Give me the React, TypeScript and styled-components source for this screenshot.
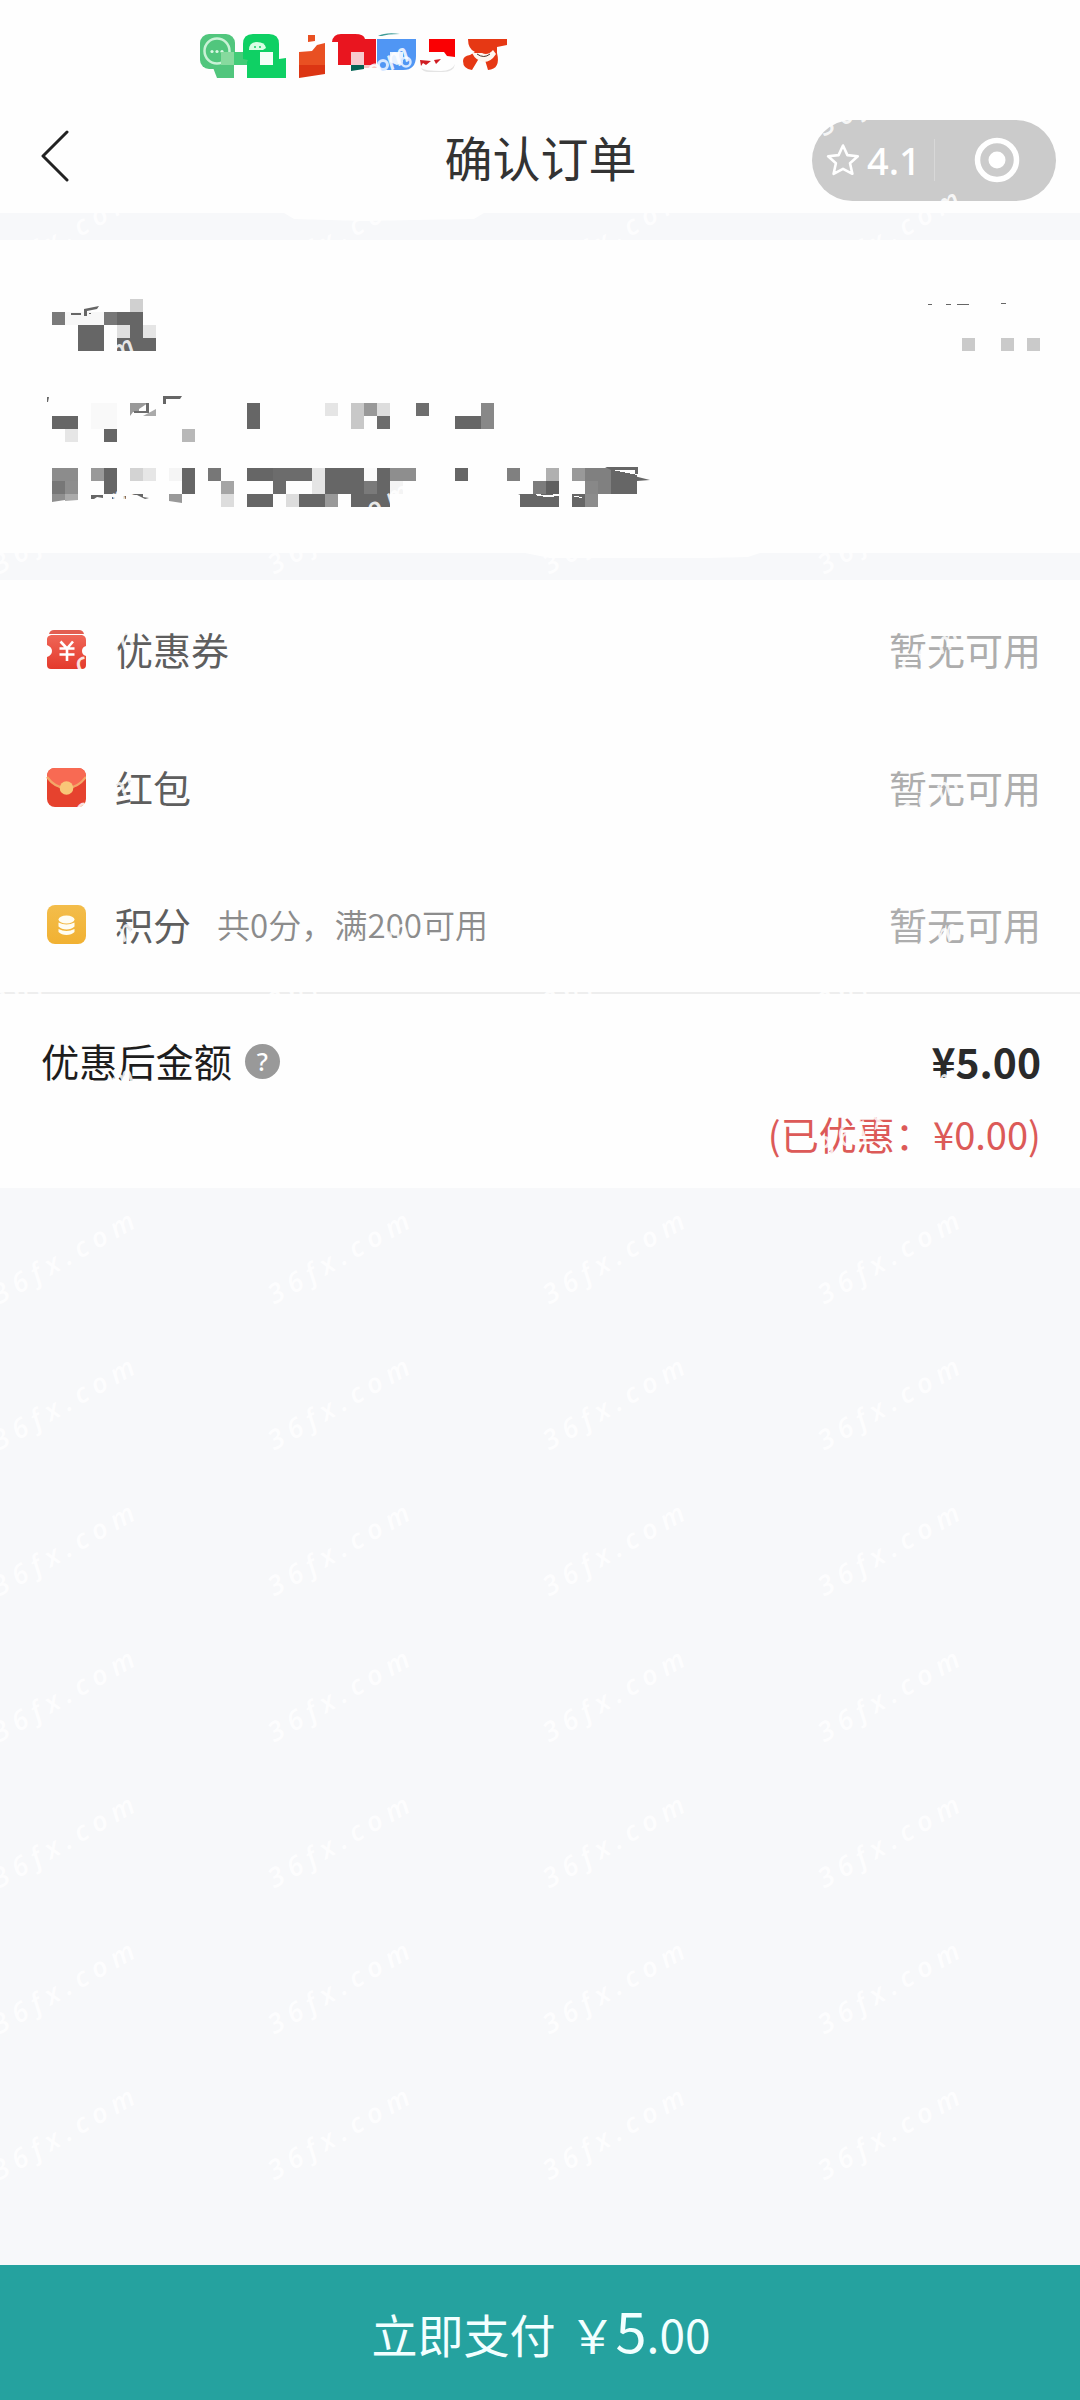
import React from 'react';
import styled, { createGlobalStyle } from 'styled-components';

const GlobalStyle = createGlobalStyle`
  * { box-sizing: border-box; }
  body {
    margin: 0;
    background: #f7f8fa;
    font-family: "Noto Sans CJK SC", "Noto Sans", sans-serif;
  }
`;

const Page = styled.div`
  position: relative;
  display: flex;
  flex-direction: column;
  width: 1080px;
  height: 2400px;
  overflow: hidden;
  background: #f7f8fa;
`;

const StatusBar = styled.div`
  flex: none;
  height: 100px;
  padding: 30px 0 0 198px;
  background: #fefefe;
  svg { display: block; }
`;

const Header = styled.header`
  flex: none;
  display: grid;
  grid-template-columns: 1fr auto 1fr;
  align-items: center;
  height: 113px;
  padding: 0 24px 0 40px;
  background: #fefefe;
`;

const BackButton = styled.button`
  justify-self: start;
  display: flex;
  padding: 0;
  margin-top: -1px;
  border: 0;
  background: none;
`;

const Title = styled.h1`
  margin: 0 15px 1px 0;
  font-size: 48px;
  line-height: 60px;
  font-weight: 400;
  color: #333;
`;

const Capsule = styled.div`
  justify-self: end;
  display: flex;
  align-items: center;
  width: 244px;
  height: 81px;
  margin-top: 7px;
  border-radius: 41px;
  background: #cbcbcb;
  color: #fff;
`;

const Rating = styled.div`
  display: flex;
  align-items: center;
  gap: 7px;
  width: 123px;
  height: 42px;
  padding-left: 14px;
  border-right: 1px solid #d8d8d8;
  font: 500 38px/42px "Noto Sans", sans-serif;
`;

const CloseTarget = styled.div`
  flex: 1;
  display: flex;
  justify-content: center;
  padding-left: 3px;
`;

const Band = styled.div`
  flex: none;
  height: 27px;
  svg { display: block; overflow: visible; }
`;

const Card = styled.section`
  flex: none;
  background: #fefefe;
`;

const Contact = styled.div`
  height: 313px;
  svg { display: block; }
`;

const Row = styled.div`
  display: flex;
  align-items: center;
  height: 137.4px;
  padding: 0 39px 0 46px;
  font-size: 38px;
`;

const RowIcon = styled.span`
  display: flex;
  width: 40px;
  margin: 3px 29px 0 0;
`;

const RowLabel = styled.span`
  color: #5e5e5e;
`;

const RowHint = styled.span`
  margin: 2px 0 0 26px;
  font-size: 33.1px;
  font-weight: 350;
  color: #8c8c8c;
`;

const RowValue = styled.span`
  margin-left: auto;
  color: #adadad;
`;

const Summary = styled.div`
  height: 196px;
  padding: 34px 39px 0 41px;
  border-top: 2px solid #eee;
`;

const SummaryLine = styled.div`
  display: flex;
  align-items: center;
  height: 64px;
`;

const SummaryLabel = styled.span`
  font-size: 38.2px;
  color: #1d1d1d;
`;

const Help = styled.span`
  display: flex;
  align-items: center;
  justify-content: center;
  width: 35px;
  height: 35px;
  margin: 3px 0 0 13px;
  border-radius: 50%;
  background: #999;
  color: #fff;
  font: 500 25px/35px "Noto Sans", sans-serif;
`;

const Total = styled.strong`
  margin: 0 0 0 auto;
  font-size: 40.8px;
  font-weight: 700;
  color: #2a2a2a;
`;

const Discount = styled.div`
  margin-top: 14px;
  text-align: right;
  font-size: 38.1px;
  line-height: 56px;
  color: #dc5a58;
`;

const PayButton = styled.button`
  flex: none;
  display: flex;
  align-items: baseline;
  justify-content: center;
  height: 135px;
  margin-top: auto;
  padding: 28px 0 0 2px;
  border: 0;
  background: #25a29f;
  color: #f2ffff;
  font: 400 46px/72px "Noto Sans CJK SC", sans-serif;
`;

const PaySymbol = styled.span`
  margin-left: 14px;
`;

const PayWhole = styled.span`
  font-size: 56px;
`;

const PayCents = styled.span`
  font-size: 46px;
`;

const WatermarkLayer = styled.div`
  position: absolute;
  top: 12px;
  left: -17px;
  display: grid;
  grid-template-columns: repeat(4, 275px);
  grid-auto-rows: 146px;
  pointer-events: none;
`;

const Mark = styled.span`
  align-self: center;
  width: 175px;
  color: rgba(255, 255, 255, 0.85);
  font: italic 600 27px/32px "Open Sans", sans-serif;
  letter-spacing: 6.6px;
  white-space: nowrap;
  transform: rotate(-29.5deg);
`;

type Block = [row: number, col: number, span: number, shade: string];

const CELL = 13;

const contactBlocks: Block[] = [
  [299, 6, 1, '#d0d0d0'],
  [312, 0, 1, '#7a7a7a'], [312, 1, 3, '#f7f7f7'], [312, 4, 1, '#777'], [312, 5, 2, '#666'],
  [325, 2, 2, '#666'], [325, 5, 1, '#e0e0e0'], [325, 6, 1, '#666'], [325, 7, 1, '#e5e5e5'],
  [338, 2, 2, '#666'], [338, 5, 3, '#666'],
  [403, 3, 2, '#f9f9f9'], [403, 15, 1, '#666'], [403, 21, 1, '#e5e5e5'], [403, 23, 1, '#c8c8c8'],
  [403, 24, 1, '#999'], [403, 25, 1, '#ddd'], [403, 28, 1, '#6e6e6e'], [403, 33, 1, '#888'],
  [416, 0, 2, '#666'], [416, 3, 2, '#f9f9f9'], [416, 15, 1, '#666'], [416, 23, 1, '#c8c8c8'],
  [416, 25, 1, '#6c6c6c'], [416, 31, 2, '#666'], [416, 33, 1, '#888'],
  [429, 1, 1, '#e6e6e6'], [429, 4, 1, '#666'], [429, 10, 1, '#b8b8b8'],
  [468, 0, 2, '#8c8c8c'], [468, 3, 1, '#999'], [468, 4, 1, '#666'], [468, 6, 1, '#d3d3d3'],
  [468, 7, 1, '#e6e6e6'], [468, 9, 1, '#f5f5f5'], [468, 10, 1, '#666'], [468, 12, 1, '#777'],
  [468, 15, 2, '#666'], [468, 17, 3, '#6c6c6c'], [468, 20, 1, '#e5e5e5'], [468, 21, 3, '#666'],
  [468, 24, 1, '#fafafa'], [468, 25, 1, '#666'], [468, 26, 2, '#8e8e8e'], [468, 31, 1, '#666'],
  [468, 35, 1, '#808080'], [468, 38, 1, '#b0b0b0'], [468, 40, 1, '#999'], [468, 41, 2, '#808080'],
  [468, 43, 2, '#666'],
  [481, 0, 1, '#777'], [481, 1, 1, '#8e8e8e'], [481, 4, 1, '#666'], [481, 10, 1, '#666'],
  [481, 13, 1, '#a5a5a5'], [481, 17, 1, '#6c6c6c'], [481, 20, 1, '#e5e5e5'], [481, 21, 3, '#666'],
  [481, 24, 1, '#7a7a7a'], [481, 25, 1, '#666'], [481, 26, 1, '#f4f4f4'], [481, 37, 1, '#7c7c7c'],
  [481, 38, 1, '#606060'], [481, 41, 1, '#888'], [481, 42, 1, '#808080'], [481, 43, 2, '#666'],
  [494, 13, 1, '#ddd'], [494, 15, 2, '#666'], [494, 18, 1, '#ddd'], [494, 19, 2, '#666'],
  [494, 21, 1, '#999'], [494, 23, 3, '#666'], [494, 36, 3, '#666'], [494, 40, 1, '#666'],
  [494, 41, 1, '#8c8c8c'],
];

const phoneBlocks = [962, 1001, 1027];

function ContactMosaic() {
  return (
    <svg width="1080" height="313" viewBox="0 240 1080 313" shapeRendering="crispEdges">
      {contactBlocks.map(([y, col, span, fill]) => (
        <rect key={`${y}-${col}`} x={52 + col * CELL} y={y} width={span * CELL} height={CELL} fill={fill} />
      ))}
      {phoneBlocks.map((x) => (
        <rect key={x} x={x} y={338} width={CELL} height={CELL} fill="#cacaca" />
      ))}
      <path d="M611 466h26v9l-24-5z" fill="#fefefe" />
      <g shapeRendering="auto" fill="#666">
        <path d="M71 313h10v2H71zM84 309l10-2 5-1-2 3-10 2v5h-3zM89 313h2v1h-2z" />
        <path d="M47 397h2l-1 5h-1z" />
        <path d="M163 396h19l-2 3h-14v5h-3z" />
        <path d="M130 403h18l-9 6v3h-6l-3 4z" fill="#999" />
        <path d="M134 411h12v-8h3v10h-15z" fill="#6c6c6c" />
        <path d="M143 416l13-7v7z" fill="#aaa" />
        <path d="M91 495h12v3l-6-1-3 2h-3zM112 497h3v2h-3zM123 496h3v3h-3zM130 495l5-1h8v3l6 1-4 1-4-2-4-2h-7z" />
        <path d="M52 494h13v6l-13 2z" fill="#8f8f8f" />
        <path d="M65 494h13v6l-13 1z" fill="#aaa" />
        <path d="M169 494h13v9l-13-2z" fill="#999" />
        <path d="M605 467h33v7h-3v-4h-24zM634 476l16 4-13 1z" />
        <path d="M518 494h5v2z" />
        <path d="M928 304h4v1h-4zM946 304h5v1h-5zM957 304h12v1h-12zM1001 303h5v1h-5z" />
      </g>
      <path d="M536 494l10 1 13-1v2l-11 1-11-1zM568 495l15 2-2 1-9-2z" fill="#fefefe" />
    </svg>
  );
}

function StatusIcons() {
  return (
    <svg width="320" height="50" viewBox="198 30 320 50">
      <rect x="200" y="34" width="35" height="35" rx="9" fill="#51c67d" />
      <circle cx="217" cy="51" r="12.5" fill="none" stroke="#c9f2d6" strokeWidth="2.5" />
      <g fill="#d9f7e2"><circle cx="212" cy="51.500" r="1.600" /><circle cx="217" cy="51.500" r="1.600" /><circle cx="222" cy="51.500" r="1.600" /></g>
      <path d="M212 65h22v13h-17z" fill="#51c67d" />
      <path d="M221 52h13v13h-13z" fill="#87da9e" />
      <path d="M234 52h14v13h-14z" fill="#43cc78" />
      <path d="M253 34h16q10 0 10 10v15l7-1v20h-39V62l1-2-5-1V44q0-10 10-10z" fill="#0fd064" />
      <path d="M249 50q0-8 8-8t9 6l-3 2z" fill="#d8ffe4" />
      <path d="M260 52h13v13h-13z" fill="#f5fff8" />
      <circle cx="255" cy="47" r="1" fill="#0fd064" /><circle cx="260" cy="47" r="1" fill="#0fd064" />
      <path d="M308 35h7v6l-7 1z" fill="#e95022" />
      <path d="M299 52l13-1 5-6 8-2v22h-26z" fill="#e95022" />
      <path d="M299 65h26v9l-26 4z" fill="#dc3513" />
      <path d="M332 42q1-8 9-8h14q9 0 10 5h11v26h-38V42z" fill="#e9151f" />
      <path d="M351 52h13v13h-13z" fill="#f7c9cd" />
      <path d="M351 65h13v4l-13 2z" fill="#026354" />
      <path d="M364 65h13v3h-13z" fill="#f8c6c6" />
      <path d="M377 39h39v17q0 14-13 14h-15q-11 0-11-10z" fill="#5096f4" />
      <path d="M378 36q8-4 22-2-13 0-18 2z" fill="#3f9c97" />
      <path d="M390 52h13v10l-6 3-7-3z" fill="#e8f2ff" />
      <circle cx="406" cy="62" r="4.500" fill="none" stroke="#d5e7ff" strokeWidth="2.500" />
      <circle cx="383" cy="65" r="4.500" fill="none" stroke="#d5e7ff" strokeWidth="3" />
      <path d="M429 39h26v18l-8-1-3-4h-15z" fill="#fa0003" />
      <path d="M420 60l11 1-5 4-3-2-2 3zM434 60l7-1-5 5z" fill="#cf1c22" />
      <path d="M421 68q4 3 20 3 11 0 14-7-1 8-12 8h-14q-6 0-8-4z" fill="#e4e4e4" />
      <path d="M468 39h39v16h0v0-10h0v-0l0 0-10 0v7q3 17-7 17l-5-9-7-1-5 10-8-1q-5-7-1-11l9-3q-5-5-5-15z" fill="none" />
      <path d="M468 39h39v6l-10 2v6q4 16-9 17l-3-10h-7l-6 10q-9-1-9-9 0-5 7-6l5-3q-7-3-7-13z" fill="#e63814" />
      <path d="M472 53h10q6 3 11-3l3 4q-5 8-12 8-8-1-12-9z" fill="#fff6ef" />
      <path d="M477 54q7 5 13 0" fill="none" stroke="#49352e" strokeWidth="1" />
    </svg>
  );
}

function StarIcon() {
  return (
    <svg width="34" height="34" viewBox="0 0 34 34" fill="none" stroke="#fff" strokeWidth="2.600" strokeLinejoin="round">
      <path d="M17 2.500l4.400 9.600 10.400 1.200-7.800 7 2.400 10.500L17 25.800l-9.400 5 2.300-10.500-7.800-7 10.500-1.200z" />
    </svg>
  );
}

function CouponIcon() {
  return (
    <svg width="40" height="40" viewBox="0 0 40 40">
      <defs>
        <linearGradient id="coupon" x2="0" y2="1"><stop stopColor="#ef6657" /><stop offset="1" stopColor="#e43a2c" /></linearGradient>
      </defs>
      <path d="M3 4q1-4 5-4h25q4 0 5 4z" fill="#e25e51" />
      <path d="M5 5h31q4 1 4 5v6q-4 1-4 5t4 5v9q0 4-4 4H5q-4 0-4-4v-8q5-2 5-6t-5-6V9q0-3 4-4z" fill="url(#coupon)" />
      <path d="M14.500 11.500l6.500 7 6-7M13.500 18.500h15M13.500 24.500h15M21 18v13" fill="none" stroke="#fff" strokeWidth="2.600" />
    </svg>
  );
}

function EnvelopeIcon() {
  return (
    <svg width="40" height="40" viewBox="0 0 40 40">
      <rect x="1" y="0" width="39" height="39" rx="8" fill="#e6422e" />
      <path d="M1 9q0-9 8-9h23q8 0 8 9-8 12-19.500 12T1 9z" fill="#f86a53" />
      <path d="M1 9q8 11 19.500 11T40 9" fill="none" stroke="#f3a668" strokeWidth="2.200" />
      <circle cx="20.500" cy="20" r="6.800" fill="#f8c778" />
    </svg>
  );
}

function PointsIcon() {
  return (
    <svg width="40" height="40" viewBox="0 0 40 40">
      <defs>
        <linearGradient id="points" x2="0" y2="1"><stop stopColor="#f3bd4b" /><stop offset="1" stopColor="#f1b132" /></linearGradient>
      </defs>
      <rect x="1" y="0" width="39" height="39" rx="8" fill="url(#points)" />
      <g fill="#fffdf2">
        <path d="M12.500 24q8 4 16 0v3q-3 3-8 3t-8-3z" />
        <path d="M12.500 17.500q8 4 16 0v4q-3 3-8 3t-8-3z" />
        <ellipse cx="20.500" cy="14.500" rx="8" ry="4" />
      </g>
    </svg>
  );
}

const offers = [
  { icon: <CouponIcon />, label: '优惠券', value: '暂无可用' },
  { icon: <EnvelopeIcon />, label: '红包', value: '暂无可用' },
  { icon: <PointsIcon />, label: '积分', hint: '共0分，满200可用', value: '暂无可用' },
];

export default function App() {
  return (
    <Page>
      <GlobalStyle />
      <StatusBar><StatusIcons /></StatusBar>
      <Header>
        <BackButton aria-label="返回">
          <svg width="30" height="52" viewBox="0 0 30 52" fill="none" stroke="#222" strokeWidth="3" strokeLinecap="round" strokeLinejoin="round">
            <path d="M27 2L3 26l24 24" />
          </svg>
        </BackButton>
        <Title>确认订单</Title>
        <Capsule>
          <Rating><StarIcon />4.1</Rating>
          <CloseTarget>
            <svg width="46" height="46" viewBox="0 0 46 46">
              <circle cx="23" cy="23" r="19.500" fill="none" stroke="#fff" strokeWidth="5.500" />
              <circle cx="23" cy="23" r="8.500" fill="#fff" />
            </svg>
          </CloseTarget>
        </Capsule>
      </Header>

      <Band>
        <svg width="1080" height="34" viewBox="0 0 1080 34">
          <path d="M284 0h200l-10 6-60 1-50 1-70-2z" fill="#fefefe" />
        </svg>
      </Band>

      <Card>
        <Contact><ContactMosaic /></Contact>
      </Card>

      <Band>
        <svg width="1080" height="27" viewBox="0 0 1080 27">
          <path d="M525 0h235l-12 4-40 1H550z" fill="#fefefe" />
        </svg>
      </Band>

      <Card>
        {offers.map((o) => (
          <Row key={o.label}>
            <RowIcon>{o.icon}</RowIcon>
            <RowLabel>{o.label}</RowLabel>
            {o.hint && <RowHint>{o.hint}</RowHint>}
            <RowValue>{o.value}</RowValue>
          </Row>
        ))}
        <Summary>
          <SummaryLine>
            <SummaryLabel>优惠后金额</SummaryLabel>
            <Help>?</Help>
            <Total>¥5.00</Total>
          </SummaryLine>
          <Discount>(已优惠：¥0.00)</Discount>
        </Summary>
      </Card>

      <PayButton>
        立即支付
        <PaySymbol>￥</PaySymbol>
        <PayWhole>5</PayWhole>
        <PayCents>.00</PayCents>
      </PayButton>

      <WatermarkLayer aria-hidden="true">
        {Array.from({ length: 60 }, (_, i) => <Mark key={i}>36fx.com</Mark>)}
      </WatermarkLayer>
    </Page>
  );
}
